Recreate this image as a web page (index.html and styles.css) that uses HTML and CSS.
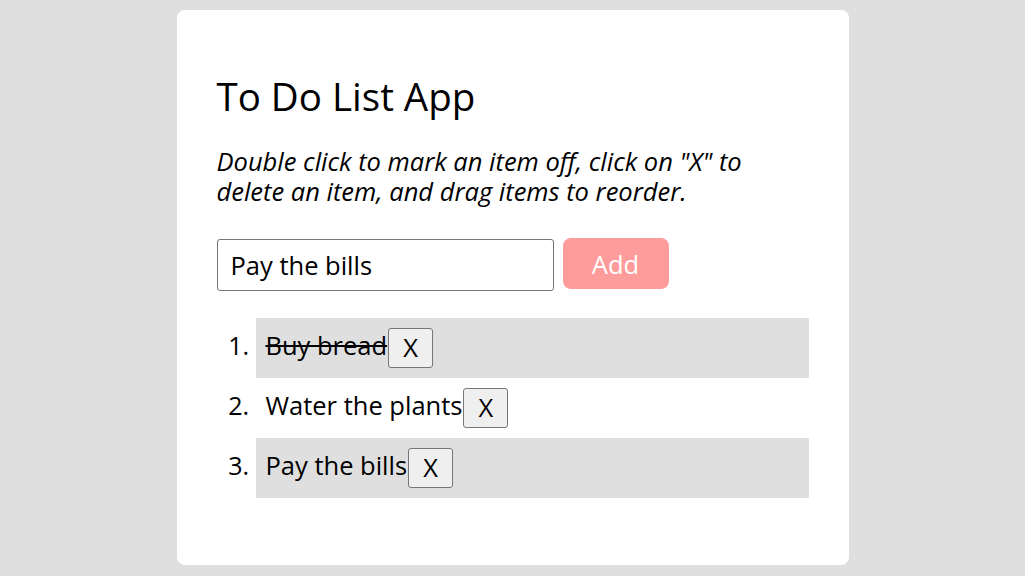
FILE: index.html
```html
<!DOCTYPE html>
<html>
<head>
<meta charset="utf-8">
<link rel="stylesheet" href="styles.css">
</head>
<body>
<main class="card">
  <h1 class="title">To Do List App</h1>
  <p class="hint">Double click to mark an item off, click on "X" to delete an item, and drag items to reorder.</p>
  <form class="add-form">
    <input class="add-input" type="text" value="Pay the bills">
    <button class="add-btn" type="button">Add</button>
  </form>
  <ol class="list">
    <li class="item"><span class="done">Buy bread</span><button class="del" type="button">X</button></li>
    <li class="item"><span>Water the plants</span><button class="del" type="button">X</button></li>
    <li class="item"><span>Pay the bills</span><button class="del" type="button">X</button></li>
  </ol>
</main>
</body>
</html>
```
FILE: styles.css
```css
html, body {
  margin: 0;
  padding: 0;
  background: #dfdfdf;
  font-family: "Open Sans", "DejaVu Sans", sans-serif;
  color: #000;
}
body {
  padding-top: 10px;
  height: 576px;
  box-sizing: border-box;
  overflow: hidden;
}
.card {
  width: 672px;
  height: 555px;
  box-sizing: border-box;
  margin: 0 auto;
  background: #fff;
  border-radius: 8px;
  padding: 40px;
}
.title {
  font-size: 38.5px;
  font-weight: 400;
  margin: 20px 0 0;
  line-height: 52px;
}
.hint {
  font-size: 25.5px;
  font-style: italic;
  line-height: 30px;
  margin: 24px 0 0;
}
.add-form {
  display: flex;
  gap: 9px;
  margin-top: 33px;
}
.add-input {
  width: 337px;
  height: 52px;
  box-sizing: border-box;
  border: 1px solid #767676;
  border-radius: 3px;
  padding: 0 13px;
  font-family: inherit;
  font-size: 25.5px;
  color: #000;
}
.add-btn {
  width: 106px;
  height: 51px;
  border: none;
  border-radius: 8px;
  background: #fe9c9c;
  color: #fff;
  font-family: inherit;
  font-size: 25.5px;
  margin-top: -1px;
  padding: 0;
}
.list {
  margin: 27px 0 0;
  padding-left: 39px;
  font-size: 25.5px;
}
.item {
  height: 60px;
  padding-left: 10px;
  line-height: 54px;
}
.item::marker {
  font-size: 25px;
}
.item:nth-child(odd) {
  background: #dfdfdf;
}
.done {
  text-decoration: line-through;
}
.del {
  font-family: inherit;
  font-size: 25.5px;
  height: 40px;
  width: 45px;
  padding: 0;
  line-height: 1;
  background: #efefef;
  border: 1px solid #767676;
  border-radius: 3px;
  color: #000;
  vertical-align: middle;
  margin-left: 1px;
}
```
